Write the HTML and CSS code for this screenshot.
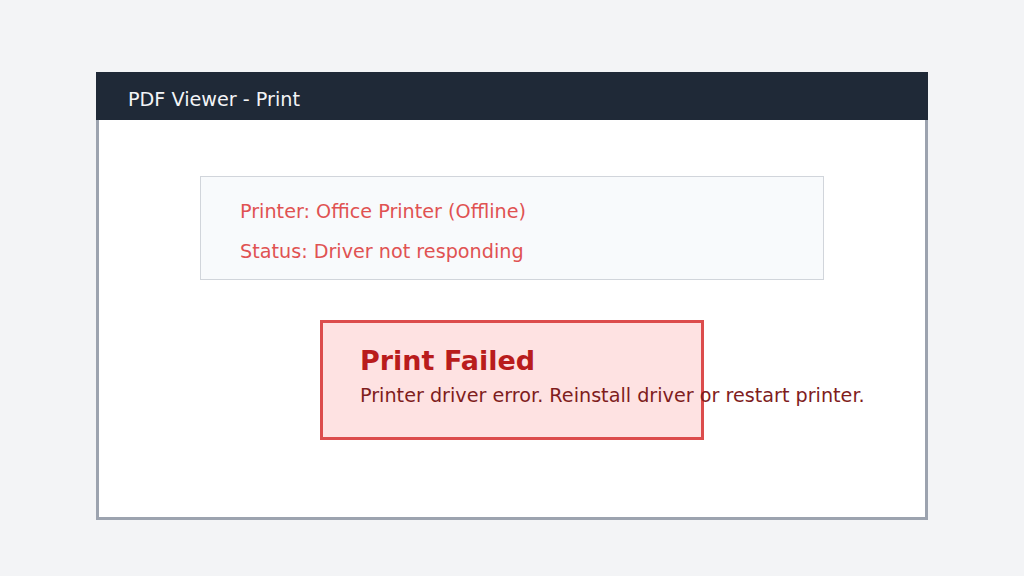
FILE: index.html
```html
<!DOCTYPE html>
<html>
<head>
<meta charset="utf-8">
<link rel="stylesheet" href="styles.css">
</head>
<body>
<div class="page">
  <div class="window">
    <div class="titlebar">PDF Viewer - Print</div>
    <div class="content">
      <div class="info">
        <p class="info-line">Printer: Office Printer (Offline)</p>
        <p class="info-line">Status: Driver not responding</p>
      </div>
      <div class="error">
        <div class="error-title">Print Failed</div>
        <div class="error-msg">Printer driver error. Reinstall driver or restart printer.</div>
      </div>
    </div>
  </div>
</div>
</body>
</html>
```
FILE: styles.css
```css
html, body {
  margin: 0;
  padding: 0;
}
body {
  background: #f3f4f6;
  font-family: "DejaVu Sans", sans-serif;
  width: 1024px;
  height: 576px;
  overflow: hidden;
}
.page {
  padding-top: 72px;
  padding-left: 96px;
}
.window {
  width: 832px;
}
.titlebar {
  height: 48px;
  background: #1f2937;
  color: #f3f4f6;
  font-size: 19.2px;
  line-height: 40px;
  padding: 8px 0 0 32px;
  box-sizing: border-box;
}
.content {
  height: 400px;
  box-sizing: border-box;
  background: #ffffff;
  border: 3px solid #9ca3af;
  border-top: none;
  display: flex;
  flex-direction: column;
  align-items: center;
  padding-top: 56px;
  gap: 40px;
}
.info {
  width: 624px;
  height: 104px;
  box-sizing: border-box;
  background: #f8fafc;
  border: 1px solid #d1d5db;
  padding: 15px 39px 6px;
}
.info-line {
  margin: 0;
  font-size: 19.2px;
  line-height: 40px;
  color: #e05252;
}
.error {
  width: 384px;
  height: 120px;
  box-sizing: border-box;
  background: #fee2e2;
  border: 3px solid #dc4c4c;
  padding: 22px 0 0 37px;
  white-space: nowrap;
}
.error-title {
  font-size: 27px;
  font-weight: bold;
  line-height: 32px;
  color: #b91c1c;
}
.error-msg {
  margin-top: 7px;
  font-size: 19.2px;
  line-height: 24px;
  color: #7f1d1d;
}
```
